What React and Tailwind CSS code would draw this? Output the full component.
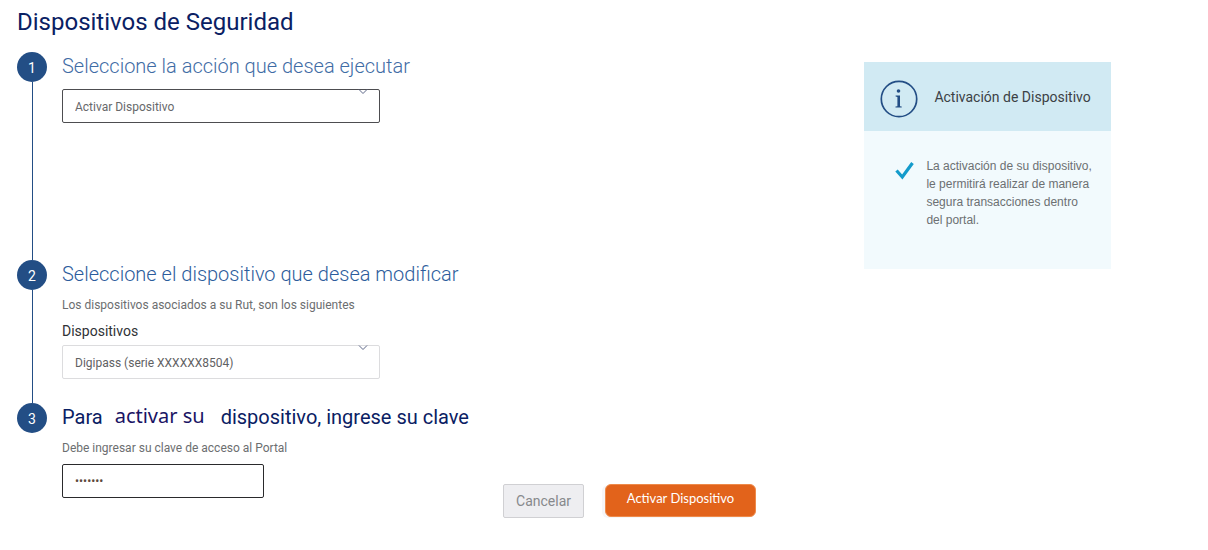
import React, { useState } from "react";

function Step({ number, minHeight, last, children }) {
  return (
    <li className={`grid grid-cols-[30px_1fr] gap-x-[15px] ${minHeight}`}>
      <div className="flex flex-col items-center">
        <span className="flex size-[30px] shrink-0 items-center justify-center rounded-full bg-[#234e85] pt-0.5 text-sm text-white">
          {number}
        </span>
        {!last && <span className="w-px flex-1 bg-[#234e85]" />}
      </div>
      <div>{children}</div>
    </li>
  );
}

function SelectBox({ id, label, border, textColor, options }) {
  return (
    <div className="relative w-full max-w-[318px]">
      <select
        id={id}
        aria-label={label}
        className={`block h-[34px] w-full appearance-none rounded-xs border bg-white px-3 pt-0.5 text-[12px] ${border} ${textColor}`}
      >
        {options.map((option) => (
          <option key={option}>{option}</option>
        ))}
      </select>
      <svg
        className="pointer-events-none absolute top-0 right-3 h-[6px] w-[10px]"
        viewBox="0 0 10 6"
        fill="none"
        stroke="#5d6687"
        aria-hidden="true"
      >
        <path d="M1 0.5 L5 4.5 L9 0.5" />
      </svg>
    </div>
  );
}

function InfoPanel() {
  return (
    <aside className="mt-[62px] min-h-[207px] w-[247px] shrink-0 bg-[#f2fafd]">
      <header className="flex h-[69px] items-center gap-4 bg-[#d1eaf3] px-4 pt-1">
        <svg className="size-[38px] shrink-0" viewBox="0 0 38 38" fill="none" aria-hidden="true">
          <circle cx="19" cy="19" r="17.7" stroke="#234e85" strokeWidth="1.7" />
          <circle cx="18.5" cy="11" r="1.8" fill="#234e85" />
          <path
            d="M15.600 15.400h4.400v10.800l1.700 .4v1h-6.200v-1l1.900-.4v-9.300l-1.800-.5z"
            fill="#234e85"
          />
        </svg>
        <h2 className="pb-1 text-sm whitespace-nowrap text-[#3c4145]">Activación de Dispositivo</h2>
      </header>
      <div className="flex gap-3 pt-[26px] pr-4 pl-[31px]">
        <svg className="mt-1 h-5 w-[19px] shrink-0" viewBox="0 0 19 20" fill="none" aria-hidden="true">
          <path d="M1.500 9.500 L7.300 16 L17.500 2" stroke="#149bcb" strokeWidth="3.200" />
        </svg>
        <p className="font-['Liberation_Sans',sans-serif] text-[12px] leading-[18px] text-[#6c7072]">
          La activación de su dispositivo,
          <br />
          le permitirá realizar de manera
          <br />
          segura transacciones dentro
          <br />
          del portal.
        </p>
      </div>
    </aside>
  );
}

export default function App() {
  const [password, setPassword] = useState("1234567");

  return (
    <main className="flex min-h-screen items-start justify-between bg-white pr-[8%] pl-[17px] font-[Roboto,sans-serif]">
      <form className="max-w-[739px] flex-1" onSubmit={(e) => e.preventDefault()}>
        <h1 className="pt-[6px] pb-[14px] text-2xl text-[#0a2063]">Dispositivos de Seguridad</h1>
        <ol>
          <Step number={1} minHeight="min-h-[208px]">
            <h2 className="mb-[9px] text-xl font-light text-[#3f6ca5]">
              Seleccione la acción que desea ejecutar
            </h2>
            <SelectBox
              id="action"
              label="Acción que desea ejecutar"
              border="border-[#4d4d50]"
              textColor="text-[#67696b]"
              options={["Activar Dispositivo"]}
            />
          </Step>
          <Step number={2} minHeight="min-h-[143px]">
            <h2 className="mb-[9px] text-xl font-light text-[#2c5c9c]">
              Seleccione el dispositivo que desea modificar
            </h2>
            <p className="mb-2 text-[12px] leading-4 text-[#6c6e70]">
              Los dispositivos asociados a su Rut, son los siguientes
            </p>
            <label htmlFor="device" className="mb-1 block text-sm text-[#303236]">
              Dispositivos
            </label>
            <SelectBox
              id="device"
              border="border-[#dcdcde]"
              textColor="text-[#5f6163]"
              options={["Digipass (serie XXXXXX8504)"]}
            />
          </Step>
          <Step number={3} minHeight="min-h-[115px]" last>
            <h2 className="mb-[9px] flex h-7 items-center text-xl text-[#0a2063]">
              <span>Para</span>
              <span className="mr-4 ml-3 pb-0.5 font-['Noto_Sans',sans-serif] text-[#1a1464]">activar su</span>
              <span>dispositivo, ingrese su clave</span>
            </h2>
            <label htmlFor="password" className="mb-2 block text-[12px] leading-4 text-[#6c6e70]">
              Debe ingresar su clave de acceso al Portal
            </label>
            <div className="flex justify-between">
              <input
                id="password"
                type="password"
                value={password}
                onChange={(e) => setPassword(e.target.value)}
                className="h-[34px] w-[202px] rounded-xs border border-[#2a2a2c] px-3 text-[12px] text-[#5c4a3c]"
              />
              <div className="flex gap-[21px] pt-5">
                <button
                  type="button"
                  className="h-[34px] rounded-xs border border-[#d0d0d3] bg-[#eeeef1] px-3 text-sm text-[#87898c]"
                >
                  Cancelar
                </button>
                <button
                  type="submit"
                  className="h-[33px] w-[151px] rounded-md border border-[#ee8a4a] bg-[#e2631b] pb-1 font-[Lato,sans-serif] text-[13px] text-white shadow-[-3px_1px_0_#f6f6f8]"
                >
                  Activar Dispositivo
                </button>
              </div>
            </div>
          </Step>
        </ol>
      </form>
      <InfoPanel />
    </main>
  );
}
